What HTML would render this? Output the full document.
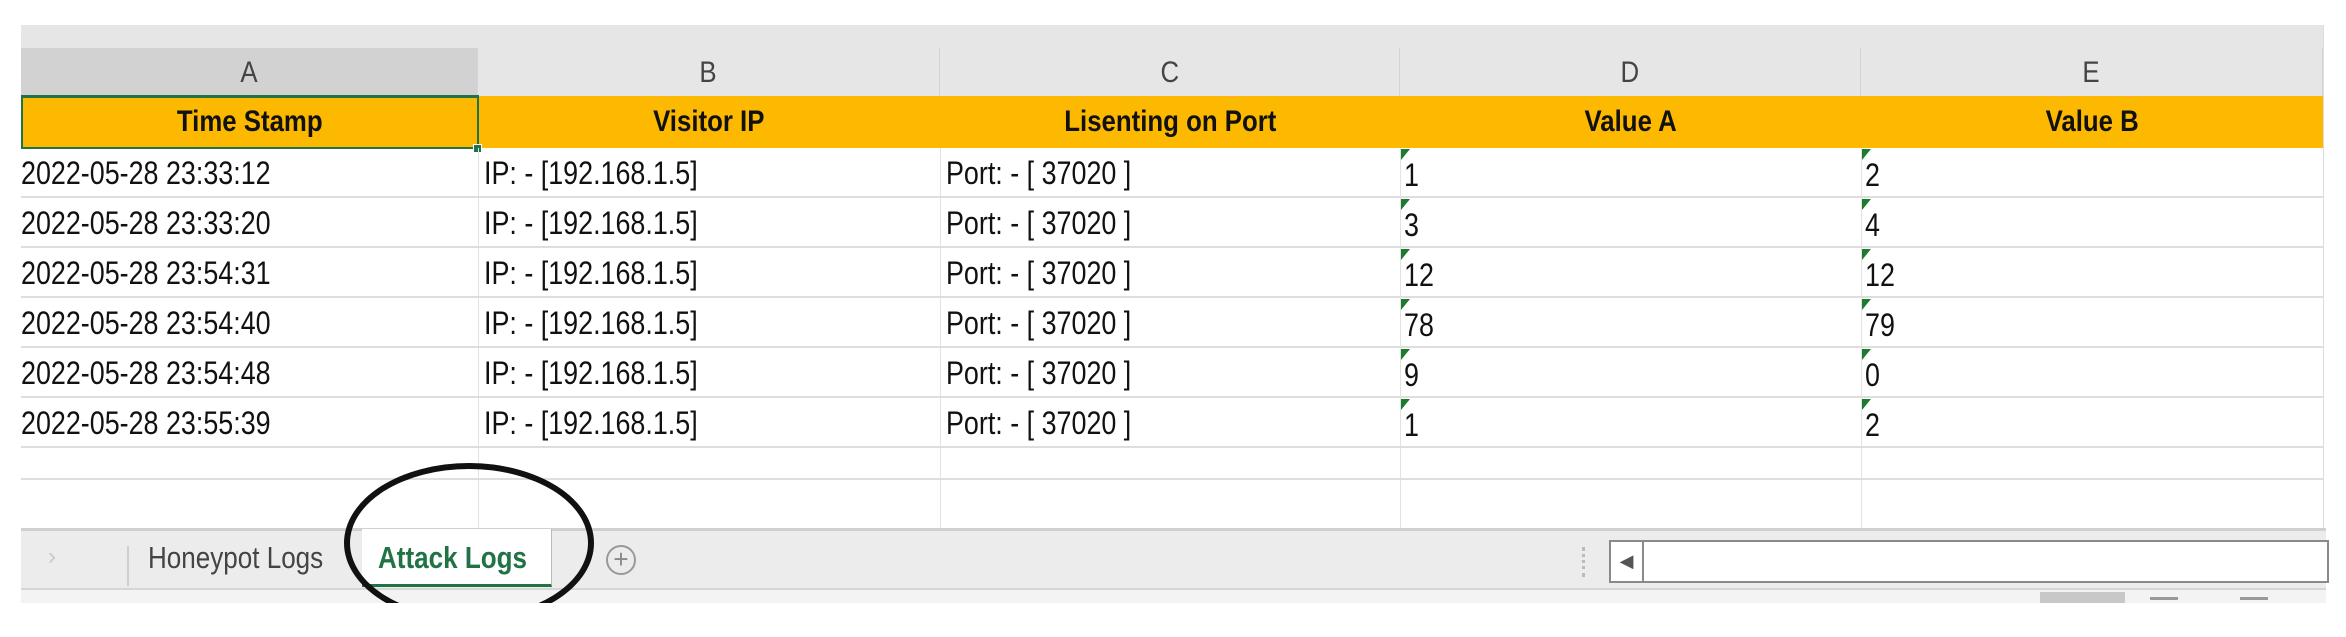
<!DOCTYPE html>
<html><head><meta charset="utf-8"><style>
body{margin:0;width:2346px;height:637px;background:#fff;position:relative;overflow:hidden;font-family:"Liberation Sans",sans-serif}
div{position:absolute;box-sizing:border-box}
span{display:inline-block;transform:scaleX(0.86)}
.colh{top:48px;height:48px;background:#e6e6e6;border-right:1px solid #d4d4d4;color:#444;font-size:30px;text-align:center;line-height:50px}
.hd{top:96px;height:52px;background:#fcb900;font-weight:bold;font-size:30px;text-align:center;line-height:52px;color:#111}
.row{left:21px;width:2302px;height:50px;border-bottom:2px solid #dedede}
.c{font-size:32px;line-height:50px;color:#111;white-space:nowrap;transform:scaleX(0.84);transform-origin:left center}
.vl{top:148px;height:380px;width:1px;background:#e2e2e2}
.tri{width:0;height:0;border-top:11px solid #1e7a2e;border-right:9px solid transparent}
</style></head><body>
<div style="left:21px;top:25px;width:2302px;height:23px;background:#e6e6e6"></div>
<div class="colh" style="left:21px;width:457px;background:#d2d2d2"><span>A</span></div>
<div class="colh" style="left:478px;width:462px"><span>B</span></div>
<div class="colh" style="left:940px;width:460px"><span>C</span></div>
<div class="colh" style="left:1400px;width:461px"><span>D</span></div>
<div class="colh" style="left:1861px;width:462px"><span>E</span></div>
<div class="hd" style="left:21px;width:457px"><span>Time Stamp</span></div>
<div class="hd" style="left:478px;width:462px"><span>Visitor IP</span></div>
<div class="hd" style="left:940px;width:460px"><span>Lisenting on Port</span></div>
<div class="hd" style="left:1400px;width:461px"><span>Value A</span></div>
<div class="hd" style="left:1861px;width:462px"><span>Value B</span></div>
<div style="left:21px;top:95px;width:458px;height:54px;border:2px solid #217346;border-top-width:3px"></div>
<div style="left:473px;top:144px;width:9px;height:9px;background:#217346;border:1px solid #fff"></div>
<div class="vl" style="left:478px"></div><div class="vl" style="left:940px"></div><div class="vl" style="left:1400px"></div><div class="vl" style="left:1861px"></div>
<div style="left:2323px;top:25px;width:1px;height:503px;background:#ddd"></div>

<div class="row" style="top:148px"></div><div class="row" style="top:198px"></div><div class="row" style="top:248px"></div><div class="row" style="top:298px"></div><div class="row" style="top:348px"></div><div class="row" style="top:398px"></div><div class="row" style="top:448px;height:32px"></div>

<div class="c" style="left:21px;top:148px">2022-05-28 23:33:12</div>
<div class="c" style="left:21px;top:198px">2022-05-28 23:33:20</div>
<div class="c" style="left:21px;top:248px">2022-05-28 23:54:31</div>
<div class="c" style="left:21px;top:298px">2022-05-28 23:54:40</div>
<div class="c" style="left:21px;top:348px">2022-05-28 23:54:48</div>
<div class="c" style="left:21px;top:398px">2022-05-28 23:55:39</div>
<div class="c" style="left:484px;top:148px">IP: - [192.168.1.5]</div>
<div class="c" style="left:484px;top:198px">IP: - [192.168.1.5]</div>
<div class="c" style="left:484px;top:248px">IP: - [192.168.1.5]</div>
<div class="c" style="left:484px;top:298px">IP: - [192.168.1.5]</div>
<div class="c" style="left:484px;top:348px">IP: - [192.168.1.5]</div>
<div class="c" style="left:484px;top:398px">IP: - [192.168.1.5]</div>
<div class="c" style="left:946px;top:148px">Port: - [ 37020 ]</div>
<div class="c" style="left:946px;top:198px">Port: - [ 37020 ]</div>
<div class="c" style="left:946px;top:248px">Port: - [ 37020 ]</div>
<div class="c" style="left:946px;top:298px">Port: - [ 37020 ]</div>
<div class="c" style="left:946px;top:348px">Port: - [ 37020 ]</div>
<div class="c" style="left:946px;top:398px">Port: - [ 37020 ]</div>
<div class="c" style="left:1404px;top:150px">1</div><div class="c" style="left:1404px;top:200px">3</div><div class="c" style="left:1404px;top:250px">12</div><div class="c" style="left:1404px;top:300px">78</div><div class="c" style="left:1404px;top:350px">9</div><div class="c" style="left:1404px;top:400px">1</div>
<div class="c" style="left:1865px;top:150px">2</div><div class="c" style="left:1865px;top:200px">4</div><div class="c" style="left:1865px;top:250px">12</div><div class="c" style="left:1865px;top:300px">79</div><div class="c" style="left:1865px;top:350px">0</div><div class="c" style="left:1865px;top:400px">2</div>
<div class="tri" style="left:1401px;top:149px"></div><div class="tri" style="left:1401px;top:199px"></div><div class="tri" style="left:1401px;top:249px"></div><div class="tri" style="left:1401px;top:299px"></div><div class="tri" style="left:1401px;top:349px"></div><div class="tri" style="left:1401px;top:399px"></div>
<div class="tri" style="left:1862px;top:149px"></div><div class="tri" style="left:1862px;top:199px"></div><div class="tri" style="left:1862px;top:249px"></div><div class="tri" style="left:1862px;top:299px"></div><div class="tri" style="left:1862px;top:349px"></div><div class="tri" style="left:1862px;top:399px"></div>

<div style="left:21px;top:528px;width:2305px;height:62px;background:#ececec;border-top:3px solid #d0d0d0;border-bottom:2px solid #d6d6d6"></div>
<div style="left:21px;top:590px;width:2305px;height:13px;background:#f3f3f3"></div>
<div style="left:48px;top:543px;color:#c8c8c8;font-size:24px">›</div>
<div style="left:127px;top:546px;width:2px;height:40px;background:#cfcfcf"></div>
<div class="c" style="left:148px;top:533px;color:#444;font-size:31px">Honeypot Logs</div>
<div style="left:362px;top:529px;width:190px;height:58px;background:#fff;border-bottom:3px solid #217346;border-right:1px solid #bbb"></div>
<div class="c" style="left:378px;top:533px;font-size:31px;font-weight:bold;color:#217346">Attack Logs</div>
<div style="left:606px;top:545px;width:30px;height:30px;border:2px solid #999;border-radius:50%;color:#888;font-size:26px;line-height:24px;text-align:center">+</div>
<div style="left:1582px;top:547px;width:3px;height:30px;border-left:3px dotted #bbb"></div>
<div style="left:1609px;top:540px;width:720px;height:43px;border:2px solid #8a8a8a;background:#fff"></div>
<div style="left:1609px;top:540px;width:35px;height:43px;border:2px solid #8a8a8a;color:#555;font-size:18px;line-height:38px;text-align:center">◀</div>
<div style="left:2040px;top:592px;width:85px;height:11px;background:#c8c8c8"></div>
<div style="left:2150px;top:597px;width:28px;height:3px;background:#999"></div>
<div style="left:2240px;top:597px;width:28px;height:3px;background:#999"></div>
<div style="left:0;top:440px;width:700px;height:163px;overflow:hidden">
<div style="left:344px;top:23px;width:250px;height:160px;border:6px solid #111;border-radius:50%"></div>
</div>
</body></html>
